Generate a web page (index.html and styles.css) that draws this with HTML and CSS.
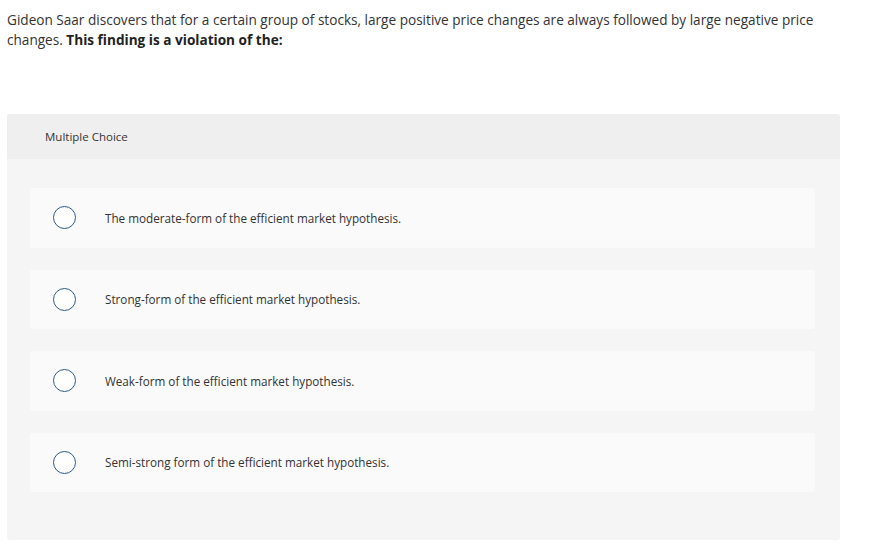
FILE: index.html
```html
<!DOCTYPE html>
<html>
<head>
<meta charset="utf-8">
<link rel="stylesheet" href="styles.css">
</head>
<body>
<div class="question">Gideon Saar discovers that for a certain group of stocks, large positive price changes are always followed by large negative price changes. <strong>This finding is a violation of the:</strong></div>
<div class="panel">
  <div class="panel-head">Multiple Choice</div>
  <div class="panel-body">
    <div class="option"><span class="radio"></span><span class="label">The moderate-form of the efficient market hypothesis.</span></div>
    <div class="option"><span class="radio"></span><span class="label">Strong-form of the efficient market hypothesis.</span></div>
    <div class="option"><span class="radio"></span><span class="label">Weak-form of the efficient market hypothesis.</span></div>
    <div class="option"><span class="radio"></span><span class="label">Semi-strong form of the efficient market hypothesis.</span></div>
  </div>
</div>
</body>
</html>
```
FILE: styles.css
```css
body {
  margin: 0;
  background: #fff;
  font-family: "Open Sans", Lato, sans-serif;
  color: #333;
}
.question {
  padding: 10px 0 0 7px;
  font-size: 13.6px;
  line-height: 20px;
  width: 840px;
  box-sizing: border-box;
}
.question strong {
  font-weight: 700;
  color: #222;
}
.panel {
  margin: 64px 0 0 7px;
  width: 833px;
  border-radius: 3px;
  background: #f5f5f5;
  overflow: hidden;
}
.panel-head {
  background: #efefef;
  height: 45px;
  display: flex;
  align-items: center;
  padding-left: 38px;
  font-size: 11.5px;
  color: #333;
}
.panel-body {
  padding: 29px 25px 48px 23px;
  display: flex;
  flex-direction: column;
  gap: 22px;
}
.option {
  background: #fafafa;
  border-radius: 3px;
  height: 59.5px;
  display: flex;
  align-items: center;
  padding-left: 23px;
}
.radio {
  width: 21px;
  height: 21px;
  border: 1.5px solid #2d5b8c;
  border-radius: 50%;
  flex: none;
  background: #fff;
}
.label {
  margin-left: 29px;
  font-size: 11.7px;
  color: #333;
}
```
